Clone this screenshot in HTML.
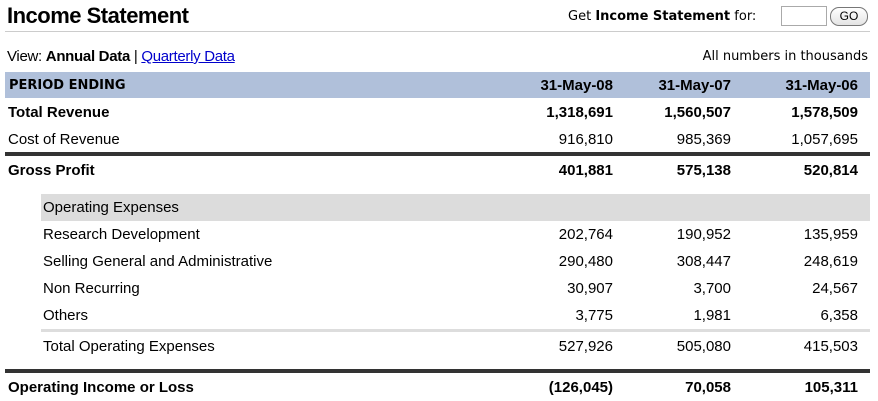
<!DOCTYPE html>
<html><head><style>
body{margin:0;width:878px;height:400px;background:#fff;font-family:"Liberation Sans",Arial,sans-serif;color:#000;position:relative;overflow:hidden}
.a{position:absolute;white-space:nowrap}
.r{position:absolute;white-space:nowrap;text-align:right}
.row{position:absolute;left:0;width:878px;height:27px;font-size:15px;line-height:27px}
.row span{position:absolute}
.n1{right:265px}.n2{right:147px}.n3{right:20px}
b{font-weight:bold}
.v{font-family:"DejaVu Sans",Verdana,sans-serif}
</style></head><body>
<div class="a" style="left:7px;top:3px;font-size:22px;font-weight:bold;letter-spacing:-0.5px">Income Statement</div>
<div class="a v" style="left:568px;top:9px;font-size:13px">Get <b>Income Statement</b> for:</div>
<div class="a" style="left:781px;top:6px;width:46px;height:20px;border:1px solid #aaa;box-sizing:border-box;background:#fff"></div>
<div class="a" style="left:830px;top:7px;width:38px;height:19px;border:1px solid #777;border-radius:9px;box-sizing:border-box;font-size:12px;line-height:17px;text-align:center;background:linear-gradient(#fff,#e4e4e4)">GO</div>
<div class="a" style="left:5px;top:31px;width:865px;height:1px;background:#ccc"></div>
<div class="a" style="left:7px;top:48px;font-size:15px;letter-spacing:-0.3px">View: <b>Annual Data</b> | <span style="color:#00c;text-decoration:underline">Quarterly Data</span></div>
<div class="r v" style="right:10px;top:49px;font-size:13px">All numbers in thousands</div>
<div class="a" style="left:5px;top:72px;width:865px;height:26px;background:#b0c0da"></div>
<div class="row" style="top:72px;font-weight:bold"><span class="v" style="left:9px;font-size:13px">PERIOD ENDING</span><span class="n1">31-May-08</span><span class="n2">31-May-07</span><span class="n3">31-May-06</span></div>
<div class="row" style="top:99px;font-weight:bold"><span style="left:8px">Total Revenue</span><span class="n1">1,318,691</span><span class="n2">1,560,507</span><span class="n3">1,578,509</span></div>
<div class="row" style="top:126px"><span style="left:8px">Cost of Revenue</span><span class="n1">916,810</span><span class="n2">985,369</span><span class="n3">1,057,695</span></div>
<div class="a" style="left:5px;top:152px;width:865px;height:4px;background:#333"></div>
<div class="row" style="top:157px;font-weight:bold"><span style="left:8px">Gross Profit</span><span class="n1">401,881</span><span class="n2">575,138</span><span class="n3">520,814</span></div>
<div class="a" style="left:41px;top:194px;width:829px;height:27px;background:#dcdcdc"></div>
<div class="row" style="top:194px"><span style="left:43px">Operating Expenses</span></div>
<div class="row" style="top:221px"><span style="left:43px">Research Development</span><span class="n1">202,764</span><span class="n2">190,952</span><span class="n3">135,959</span></div>
<div class="row" style="top:248px"><span style="left:43px">Selling General and Administrative</span><span class="n1">290,480</span><span class="n2">308,447</span><span class="n3">248,619</span></div>
<div class="row" style="top:275px"><span style="left:43px">Non Recurring</span><span class="n1">30,907</span><span class="n2">3,700</span><span class="n3">24,567</span></div>
<div class="row" style="top:302px"><span style="left:43px">Others</span><span class="n1">3,775</span><span class="n2">1,981</span><span class="n3">6,358</span></div>
<div class="a" style="left:41px;top:329px;width:829px;height:3px;background:#ddd"></div>
<div class="row" style="top:333px"><span style="left:43px">Total Operating Expenses</span><span class="n1">527,926</span><span class="n2">505,080</span><span class="n3">415,503</span></div>
<div class="a" style="left:5px;top:369px;width:865px;height:4px;background:#333"></div>
<div class="row" style="top:374px;font-weight:bold"><span style="left:8px">Operating Income or Loss</span><span class="n1">(126,045)</span><span class="n2">70,058</span><span class="n3">105,311</span></div>
</body></html>
